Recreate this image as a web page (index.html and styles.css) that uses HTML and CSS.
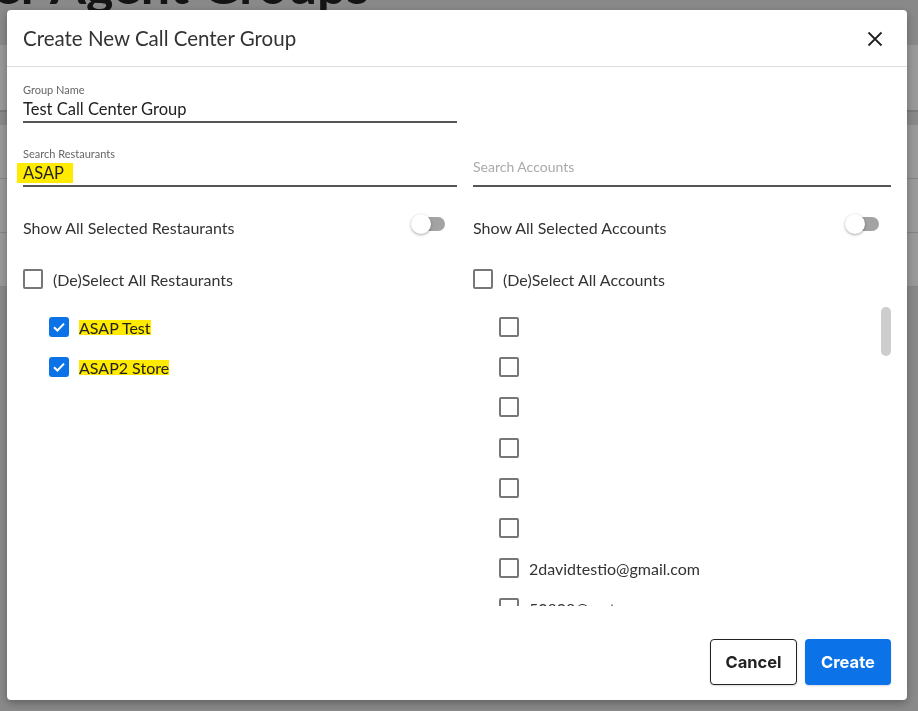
FILE: index.html
```html
<!DOCTYPE html>
<html lang="en">
<head>
	<meta charset="UTF-8">
	<meta name="viewport" content="width=device-width, initial-scale=1.0">
	<title>Call Center Agent Groups</title>
	<link rel="stylesheet" href="styles.css">
</head>
<body>
	<div class="page">
		<h1 class="page-title">Call Center Agent Groups</h1>
		<div class="toolbar"></div>
		<div class="table">
			<div class="table-row"></div>
			<div class="table-row"></div>
			<div class="table-row"></div>
		</div>
	</div>

	<div class="overlay">
		<div class="modal">
			<div class="modal-header">
				<h2 class="modal-title">Create New Call Center Group</h2>
				<button class="close" aria-label="Close">
					<svg width="16" height="16" viewBox="0 0 16 16"><path d="M1.5 1.5 14.5 14.5M14.5 1.5 1.5 14.5" stroke="#222" stroke-width="1.8" fill="none"/></svg>
				</button>
			</div>

			<div class="modal-body">
				<div class="field">
					<label class="field-label">Group Name</label>
					<div class="field-input">Test Call Center Group</div>
				</div>
				<div></div>

				<div class="field field-search">
					<label class="field-label">Search Restaurants</label>
					<div class="field-input"><span class="hl-input">ASAP</span></div>
				</div>
				<div class="field field-plain">
					<div class="field-input placeholder">Search Accounts</div>
				</div>

				<div class="toggle-row">
					<span>Show All Selected Restaurants</span>
					<span class="switch"><span class="knob"></span></span>
				</div>
				<div class="toggle-row">
					<span>Show All Selected Accounts</span>
					<span class="switch"><span class="knob"></span></span>
				</div>

				<div class="check-row select-all">
					<span class="box"></span>
					<span>(De)Select All Restaurants</span>
				</div>
				<div class="check-row select-all">
					<span class="box"></span>
					<span>(De)Select All Accounts</span>
				</div>

				<div class="list">
					<div class="check-row">
						<span class="box checked"><svg width="14" height="14" viewBox="0 0 14 14"><path d="M2 7.2 5.4 10.5 12 3.6" stroke="#fff" stroke-width="2" fill="none"/></svg></span>
						<mark>ASAP Test</mark>
					</div>
					<div class="check-row">
						<span class="box checked"><svg width="14" height="14" viewBox="0 0 14 14"><path d="M2 7.2 5.4 10.5 12 3.6" stroke="#fff" stroke-width="2" fill="none"/></svg></span>
						<mark>ASAP2 Store</mark>
					</div>
				</div>

				<div class="list list-scroll">
					<div class="check-row"><span class="box"></span><span></span></div>
					<div class="check-row"><span class="box"></span><span></span></div>
					<div class="check-row"><span class="box"></span><span></span></div>
					<div class="check-row"><span class="box"></span><span></span></div>
					<div class="check-row"><span class="box"></span><span></span></div>
					<div class="check-row"><span class="box"></span><span></span></div>
					<div class="check-row"><span class="box"></span><span>2davidtestio@gmail.com</span></div>
					<div class="check-row"><span class="box"></span><span>50808@qa.team</span></div>
					<div class="scroll-thumb"></div>
				</div>
			</div>

			<div class="modal-footer">
				<button class="btn btn-cancel">Cancel</button>
				<button class="btn btn-create">Create</button>
			</div>
		</div>
	</div>
</body>
</html>
```

FILE: styles.css
```css
body {
	margin: 0;
	font-family: Lato, "Noto Sans", sans-serif;
	background: #e4e4e4;
	color: #222;
	height: 711px;
	overflow: hidden;
}

/* page behind the dialog */
.page-title {
	margin: -47px 0 0 -216px;
	font-size: 52px;
	font-weight: 700;
	color: #222;
	white-space: nowrap;
	line-height: 62px;
}

.toolbar {
	margin-top: 30px;
	height: 65px;
	background: #fff;
	border-bottom: 2px solid #ccc;
}

.table {
	margin-top: 13px;
	background: #fff;
}

.table-row {
	height: 53px;
	border-bottom: 1px solid #ddd;
}

/* dialog */
.overlay {
	position: fixed;
	inset: 0;
	background: rgba(0, 0, 0, 0.4);
	padding: 10px 0 0 7px;
}

.modal {
	width: 900px;
	height: 690px;
	background: #fff;
	border-radius: 4px;
	box-shadow: 0 3px 8px rgba(0, 0, 0, 0.3);
	display: flex;
	flex-direction: column;
}

.modal-header {
	height: 56px;
	border-bottom: 1px solid #dedede;
	display: flex;
	align-items: center;
	justify-content: space-between;
	padding: 0 24px 0 16px;
}

.modal-title {
	margin: 0;
	font-size: 20.5px;
	font-weight: 400;
	color: #333;
}

.close {
	border: none;
	background: none;
	padding: 0;
	width: 16px;
	height: 16px;
	cursor: pointer;
	margin-top: 2px;
}

.modal-body {
	flex: 1;
	padding: 16px 16px 0 16px;
	display: grid;
	grid-template-columns: 434px 418px;
	column-gap: 16px;
	align-content: start;
}

.field-label {
	display: block;
	font-size: 11px;
	line-height: 13px;
	color: #666;
}

.field-input {
	font-size: 16.5px;
	line-height: 20px;
	padding: 3px 0 2px;
	border-bottom: 2px solid #555;
	color: #222;
}

.field-search {
	margin-top: 24px;
}

.field-plain {
	align-self: end;
}

.field-plain .field-input {
	padding-bottom: 8px;
}

.placeholder {
	font-size: 14px;
	color: #aaa;
}

.hl-input {
	background: #ffea00;
	margin-left: -6px;
	padding: 0 9px 0 6px;
}

.toggle-row {
	margin-top: 28px;
	height: 24px;
	display: flex;
	align-items: center;
	justify-content: space-between;
	padding-right: 12px;
	font-size: 16px;
	color: #333;
}

.switch {
	position: relative;
	width: 28px;
	height: 14px;
	border-radius: 7px;
	background: #a3a3a3;
	margin-top: -7px;
}

.knob {
	position: absolute;
	left: -6px;
	top: -3px;
	width: 20px;
	height: 20px;
	border-radius: 50%;
	background: #fff;
	box-shadow: 0 1px 3px rgba(0, 0, 0, 0.35);
}

.check-row {
	display: flex;
	align-items: center;
	gap: 10px;
	height: 40px;
	padding-left: 26px;
	font-size: 16px;
	color: #333;
}

.check-row.select-all {
	margin-top: 30px;
	height: 20px;
	padding-left: 0;
}

.box {
	width: 20px;
	height: 20px;
	box-sizing: border-box;
	border: 2px solid #777;
	border-radius: 2px;
	flex-shrink: 0;
	display: flex;
	align-items: center;
	justify-content: center;
}

.box.checked {
	border: none;
	border-radius: 3px;
	background: #0b72e8;
}

mark {
	background: #ffea00;
	color: #222;
	line-height: 15px;
	display: inline-block;
}

.list {
	margin-top: 18px;
	height: 299px;
	overflow: hidden;
}

.list-scroll {
	position: relative;
}

.list-scroll .check-row {
	height: 40.2px;
}

.scroll-thumb {
	position: absolute;
	right: 0;
	top: 0;
	width: 10px;
	height: 49px;
	border-radius: 5px;
	background: #cdcdcd;
}

.modal-footer {
	display: flex;
	justify-content: flex-end;
	gap: 8px;
	padding: 0 16px 15px;
}

.btn {
	height: 46px;
	border-radius: 4px;
	font-family: Inter, "Liberation Sans", sans-serif;
	font-size: 16.5px;
	font-weight: 700;
	cursor: pointer;
	box-shadow: 0 1px 2px rgba(0, 0, 0, 0.15);
}

.btn-cancel {
	width: 87px;
	background: #fff;
	color: #222;
	border: 1px solid #222;
}

.btn-create {
	width: 86px;
	background: #0b72e8;
	color: #fff;
	border: none;
}
```
